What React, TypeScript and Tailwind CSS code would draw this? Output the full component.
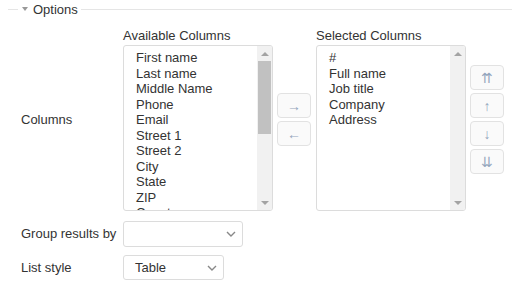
import React from "react";

const available = [
  "First name",
  "Last name",
  "Middle Name",
  "Phone",
  "Email",
  "Street 1",
  "Street 2",
  "City",
  "State",
  "ZIP",
  "Country",
];

const selected = ["#", "Full name", "Job title", "Company", "Address"];

const Chevron: React.FC = () => (
  <svg width="10" height="6" viewBox="0 0 10 6" className="shrink-0">
    <polyline points="1,1 5,5 9,1" fill="none" stroke="#888" strokeWidth="1.4" />
  </svg>
);

const ListBox: React.FC<{ items: string[]; thumb?: boolean }> = ({ items, thumb }) => (
  <div className="flex h-[166px] w-[150px] overflow-hidden rounded-[3px] border border-[#dcdcdc] bg-white">
    <ul className="flex-1 overflow-hidden pl-[12px] pt-[4px] text-[13px] leading-[15.5px] text-[#333]">
      {items.map((it) => (
        <li key={it} className="whitespace-nowrap">
          {it}
        </li>
      ))}
    </ul>
    <div className="flex w-[15px] flex-col items-center bg-[#f1f1f1]">
      <div className="flex h-[15px] items-center justify-center">
        <div className="h-0 w-0 border-x-[4px] border-b-[4px] border-x-transparent border-b-[#a3a3a3]" />
      </div>
      <div className="flex-1 w-full px-[1px]">
        {thumb && <div className="h-[73px] w-full bg-[#c1c1c1]" />}
      </div>
      <div className="flex h-[15px] items-center justify-center">
        <div className="h-0 w-0 border-x-[4px] border-t-[4px] border-x-transparent border-t-[#a3a3a3]" />
      </div>
    </div>
  </div>
);

const ArrowButton: React.FC<{ glyph: string }> = ({ glyph }) => (
  <button className="flex h-[25px] w-[34px] items-center justify-center rounded-[4px] border border-[#e2e2e2] bg-[#fafafa] text-[14px] leading-none text-[#94a6bd]">
    {glyph}
  </button>
);

export default function App() {
  return (
    <div
      className="h-[290px] w-[519px] bg-white pl-[8px] pr-[7px] text-[13px] text-[#333]"
      style={{ fontFamily: '"Liberation Sans", Arial, sans-serif' }}
    >
      <div className="flex h-[18px] items-center">
        <div className="h-px w-[10px] bg-[#e5e5e5]" />
        <div className="ml-[4px] h-0 w-0 border-x-[3.5px] border-t-[4px] border-x-transparent border-t-[#999]" />
        <span className="ml-[5px] leading-none">Options</span>
        <div className="ml-[3px] h-px flex-1 bg-[#e5e5e5]" />
      </div>

      <div className="pl-[13px] pt-[10px]">
        <div className="flex items-center">
          <div className="w-[102px]">Columns</div>
          <div className="flex flex-col">
            <div className="h-[17px] leading-[15px]">Available Columns</div>
            <ListBox items={available} thumb />
          </div>
          <div className="ml-[4px] flex flex-col gap-[3px]">
            <ArrowButton glyph="→" />
            <ArrowButton glyph="←" />
          </div>
          <div className="ml-[5px] flex flex-col">
            <div className="h-[17px] leading-[15px]">Selected Columns</div>
            <ListBox items={selected} />
          </div>
          <div className="ml-[4px] flex flex-col gap-[3px]">
            <ArrowButton glyph="⇈" />
            <ArrowButton glyph="↑" />
            <ArrowButton glyph="↓" />
            <ArrowButton glyph="⇊" />
          </div>
        </div>

        <div className="mt-[10px] flex items-center">
          <div className="w-[102px]">Group results by</div>
          <div className="flex h-[26px] w-[120px] items-center justify-end rounded-[3px] border border-[#dcdcdc] bg-white pr-[6px]">
            <Chevron />
          </div>
        </div>

        <div className="mt-[8px] flex items-center">
          <div className="w-[102px]">List style</div>
          <div className="flex h-[25px] w-[101px] items-center justify-between rounded-[3px] border border-[#dcdcdc] bg-white pl-[11px] pr-[6px]">
            <span>Table</span>
            <Chevron />
          </div>
        </div>
      </div>
    </div>
  );
}
